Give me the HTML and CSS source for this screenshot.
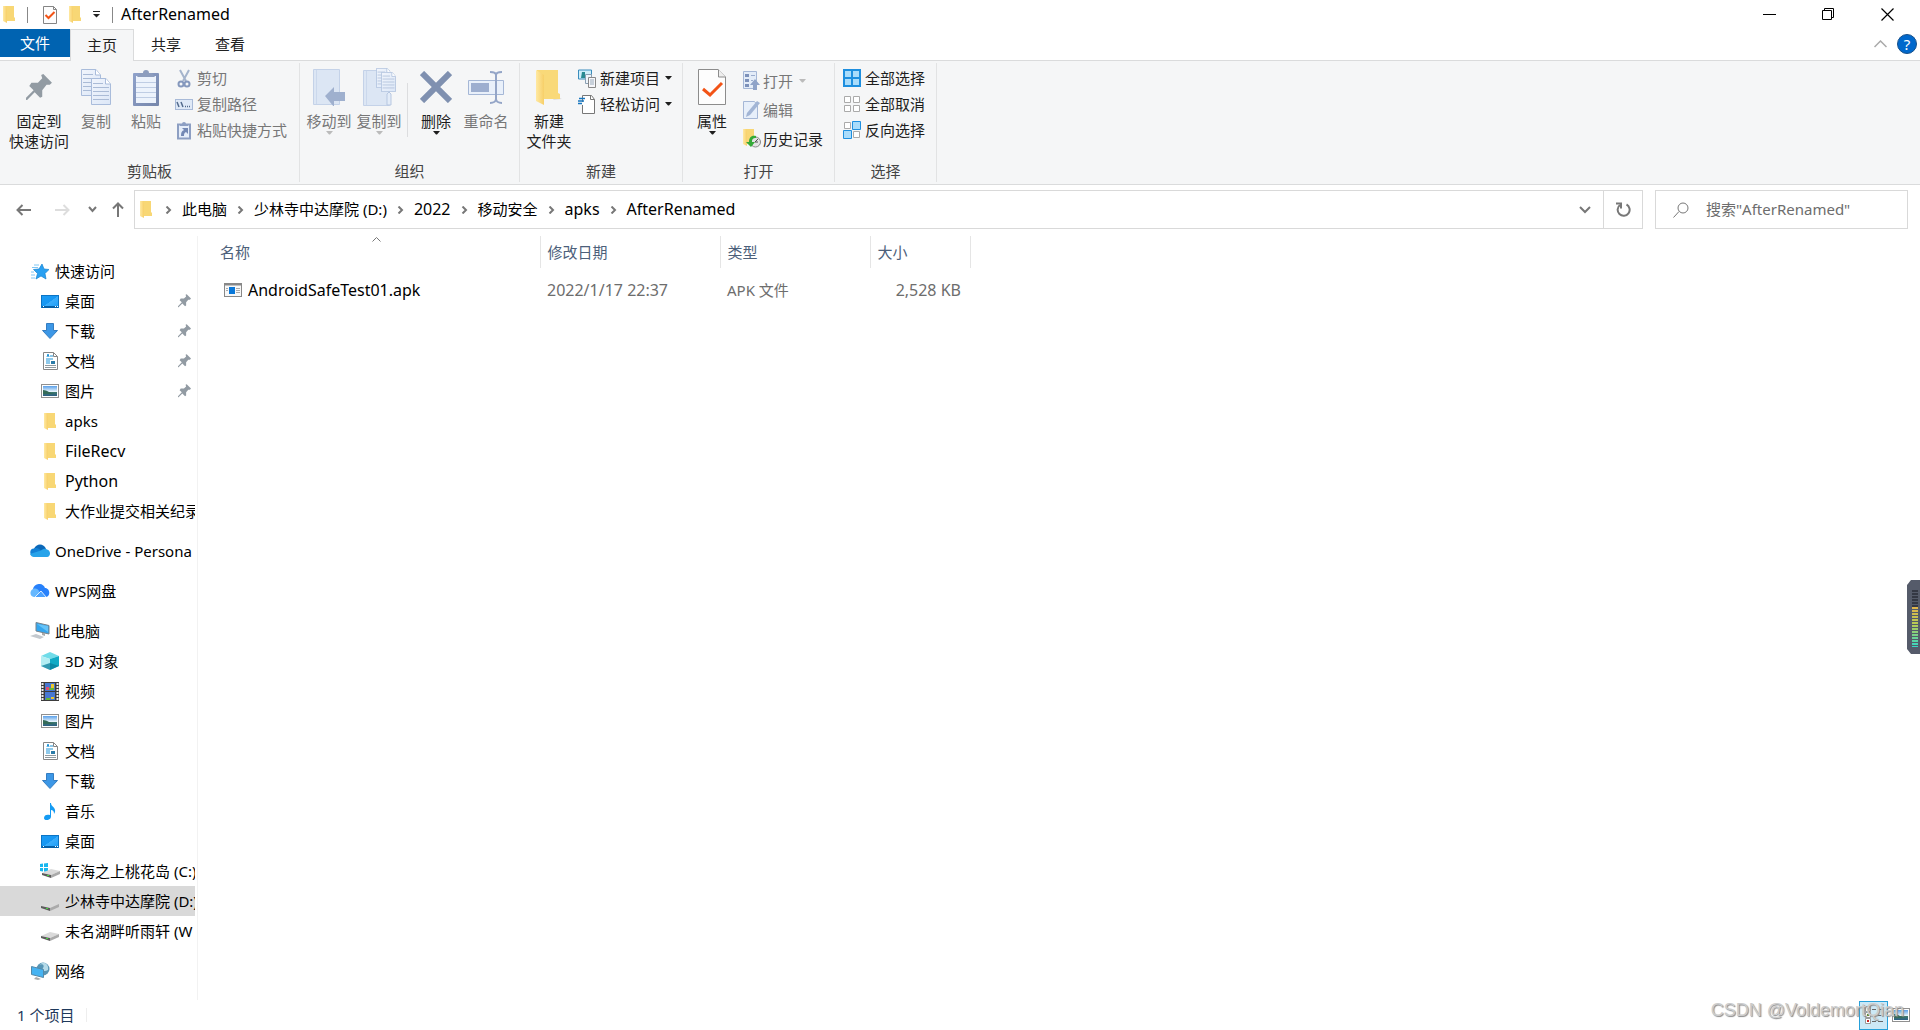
FILE: index.html
```html
<!DOCTYPE html>
<html lang="zh-CN">
<head>
<meta charset="utf-8">
<meta name="viewport" content="width=device-width, initial-scale=1">
<title>AfterRenamed</title>
<link rel="stylesheet" href="styles.css">
</head>
<body>
<svg class="defs" aria-hidden="true">
  <defs>
    <linearGradient id="gFolder" x1="0" x2="1"><stop offset="0" stop-color="#ffe9a2"/><stop offset="1" stop-color="#f7cf68"/></linearGradient>
    <linearGradient id="gDesk" x1="0" y1="0" x2="1" y2="1"><stop offset="0" stop-color="#1a9bf5"/><stop offset=".5" stop-color="#1797f2"/><stop offset=".52" stop-color="#3badfb"/><stop offset="1" stop-color="#1b9cf7"/></linearGradient>
    <linearGradient id="gSky" x1="0" y1="0" x2="0" y2="1"><stop offset="0" stop-color="#5aa0ea"/><stop offset=".55" stop-color="#e6f3fb"/><stop offset=".6" stop-color="#3f7a6a"/><stop offset="1" stop-color="#2c5f86"/></linearGradient>
    <linearGradient id="gClip" x1="0" x2="1" y2="1"><stop offset="0" stop-color="#8fa2cb"/><stop offset="1" stop-color="#7686ab"/></linearGradient>
    <linearGradient id="gPaper" y2="1"><stop offset="0" stop-color="#f1f5fc"/><stop offset="1" stop-color="#dce7f7"/></linearGradient>
    <linearGradient id="gLevel" x2="0" y2="1"><stop offset="0" stop-color="#e2b44a"/><stop offset=".45" stop-color="#b4cc56"/><stop offset="1" stop-color="#35d9c4"/></linearGradient>
    <symbol id="folder" viewBox="0 0 12 17"><path d="M3 0h8v11l1 1v3H3z" fill="#f8d775"/><path d="M0 0h3l1 4v13l-4-2z" fill="url(#gFolder)"/></symbol>
    <symbol id="pin" viewBox="0 0 24 25"><path d="M16 0l8 8-2 2-3 0-4 5 0 6-2 1-5-5-7 7-1 0 0-2 7-7-4-4 2-3 6 0 4-4-1-3z" fill="#929ba3"/></symbol>
    <symbol id="desktop" viewBox="0 0 18 13"><rect x=".5" y=".5" width="17" height="12" fill="url(#gDesk)" stroke="#0b74c4"/><path d="M1 12h16" stroke="#0560a8" stroke-width="2"/><path d="M2 11.500h1M14 11.500h1M16 11.500h1" stroke="#fff"/></symbol>
    <symbol id="down" viewBox="0 0 16 16"><path d="M4.500.5h7v7h4L8 15.500.5 7.500h4z" fill="#3c97e6" stroke="#347dc1"/></symbol>
    <symbol id="doc" viewBox="0 0 15 18"><path d="M.5.5h10l4 4v13H.5z" fill="#fff" stroke="#868686"/><path d="M10.500.5v4h4" fill="none" stroke="#868686"/><path d="M4 5l1-3 1 3M7 4h3M3 7h7M3 9h4M3 11h4" fill="none" stroke="#1f93d6"/><path d="M8 9h4v3H8z" fill="#2d7ca8"/><path d="M2 13.500h11M2 15.500h11" stroke="#909a9f"/></symbol>
    <symbol id="picture" viewBox="0 0 18 14"><rect x=".5" y=".5" width="17" height="13" fill="#fff" stroke="#909090"/><path d="M2 2h14v10H2z" fill="url(#gSky)"/><path d="M2 6c4 0 7 3 11 4H2z" fill="#346b58"/></symbol>
    <symbol id="page" viewBox="0 0 20 27"><path d="M.5.5H15L19.500 6v20.500H.5z" fill="url(#gPaper)" stroke="#a9bcdb"/><path d="M14.500.5V6h5" fill="#fff" stroke="#a9bcdb"/><path d="M2 5.500h10M2 9.500h16M2 13.500h16M2 17.500h16M2 21.500h16" stroke="#aabbd6"/></symbol>
    <symbol id="checkpage" viewBox="0 0 28 36"><path d="M.5.500H20l7.500 7.500v27.500H.5z" fill="#fdfdfd" stroke="#8c8c8c"/><path d="M20.500.5V8h7" fill="#eee" stroke="#8c8c8c"/><path d="M5 20l7 6 12-12" fill="none" stroke="#f25316" stroke-width="3"/></symbol>
    <symbol id="drive" viewBox="0 0 18 9"><path d="M0 4L9 0l9 2-9 4z" fill="#dadada"/><path d="M0 4l9 2v3L0 6z" fill="#5c5c5c"/><path d="M9 6l9-4v3L9 9z" fill="#aaa"/><path d="M5 6.500h2" stroke="#43dc3b"/></symbol>
    <symbol id="chev" viewBox="0 0 7 8"><path d="M1.500.5L5 4 1.500 7.500" fill="none" stroke="#777" stroke-width="2"/></symbol>
    <symbol id="tri" viewBox="0 0 7 4"><path d="M0 0h7L4 3.500H3z" fill="currentColor"/></symbol>
  </defs>
</svg>

<header class="titlebar">
  <div class="quick">
    <svg class="i-folder" aria-hidden="true"><use href="#folder"/></svg>
    <span class="bar"></span>
    <button class="plain" aria-label="属性"><svg width="14" height="18"><path d="M.5.5h10l3 3v14H.5z" fill="#fdfdfd" stroke="#858585"/><path d="M10.500.5v3h3" fill="none" stroke="#858585"/><path d="M2.500 9l3 3 6-6" fill="none" stroke="#f25316" stroke-width="2"/></svg></button>
    <button class="plain" aria-label="新建文件夹"><svg class="i-folder"><use href="#folder"/></svg></button>
    <button class="plain" aria-label="自定义快速访问工具栏"><svg width="7" height="7"><path d="M0 .5h7" stroke="#222"/><path d="M0 3h7L3.500 6.500z" fill="#222"/></svg></button>
    <span class="bar"></span>
  </div>
  <h1>AfterRenamed</h1>
  <div class="winbtns">
    <button class="plain" aria-label="最小化"><svg width="13" height="13"><path d="M0 6.500h13" stroke="#000"/></svg></button>
    <button class="plain" aria-label="还原"><svg width="13" height="13" fill="none" stroke="#000"><path d="M.5 2.500h9v9h-9zM2.500 2V.5h9v9H10"/></svg></button>
    <button class="plain" aria-label="关闭"><svg width="13" height="13"><path d="M.5.5l12 12M12.500.5l-12 12" stroke="#000" stroke-width="1.200"/></svg></button>
  </div>
</header>

<nav class="tabs" aria-label="功能区">
  <button class="file">文件</button>
  <button class="tab active">主页</button>
  <button class="tab">共享</button>
  <button class="tab">查看</button>
  <div class="tabtools">
    <button class="plain" aria-label="折叠功能区"><svg width="13" height="8"><path d="M.5 7l6-6 6 6" fill="none" stroke="#aaa" stroke-width="1.500"/></svg></button>
    <button class="help" aria-label="帮助">?</button>
  </div>
</nav>

<section class="ribbon">
  <div class="group first">
    <div class="tools">
      <button class="big wide"><span class="pic"><svg width="26" height="27"><use href="#pin"/></svg></span>固定到<br>快速访问</button>
      <button class="big off"><span class="pic"><svg width="30" height="36"><use href="#page" width="20" height="27"/><use href="#page" x="10" y="9" width="20" height="27"/></svg></span>复制</button>
      <button class="big off"><span class="pic"><svg width="26" height="37"><rect y="4" width="26" height="33" rx="1" fill="url(#gClip)"/><rect x="3" y="7" width="20" height="27" fill="#edf3fc"/><path d="M3 13.500h20M3 18.500h20M3 23.500h20M3 28.500h20" stroke="#bfcde4"/><path d="M4 8l3-4h3a3 3 0 016 0h3l3 4z" fill="#8d9dbe"/></svg></span>粘贴</button>
      <div class="rows">
        <button class="small off"><svg width="18" height="19" viewBox="0 0 18 19" fill="none"><path d="M5 1l6 11M14 1L8 12" stroke="#a5b4cc" stroke-width="2"/><circle cx="6" cy="15" r="2.500" stroke="#8598bd" stroke-width="2"/><circle cx="12" cy="15" r="2.500" stroke="#8598bd" stroke-width="2"/></svg>剪切</button>
        <button class="small off"><svg width="18" height="11"><rect x=".5" y=".5" width="17" height="10" fill="#dfe9f7" stroke="#a8bad8"/><path d="M2 3l2 5M6 3l2 5M10 7.500h1M12 7.500h1M14 7.500h1" stroke="#536b8d" stroke-width="1.500"/></svg>复制路径</button>
        <button class="small off"><svg width="18" height="19"><path d="M3 3.500h12v14H3z" fill="#e6eefa" stroke="#8d9fc3" stroke-width="2"/><path d="M5 3h2a2 2 0 014 0h2v2H5z" fill="#8d9fc3"/><path d="M6 15c0-4 1-5 3-6L7 7h6v6l-2-2c-2 1-2 2-2 4z" fill="#7489b5"/></svg>粘贴快捷方式</button>
      </div>
    </div>
    <div class="caption">剪贴板</div>
  </div>
  <div class="group organize">
    <div class="tools">
      <button class="big off"><span class="pic"><svg width="32" height="37"><path d="M.5.500h26v35H.5z" fill="#dce6f4" stroke="#c4d2e8"/><path d="M3.500 1v34" stroke="#cbd8ec"/><path d="M12 27l9-9v5h11v9H21v6z" fill="#9fb0ce"/></svg></span>移动到<svg class="tri"><use href="#tri"/></svg></button>
      <button class="big off"><span class="pic"><svg width="34" height="38"><path d="M1.500 2.500h26v35h-26z" fill="#dce6f4" stroke="#c4d2e8"/><path d="M4.500 3v34" stroke="#cbd8ec"/><path d="M25 37V26l2-2 2 2v11z" fill="#e3ecf8" stroke="#b7c7e1"/><use href="#page" x="14" width="15" height="20"/><use href="#page" x="19" y="4" width="15" height="20"/></svg></span>复制到<svg class="tri"><use href="#tri"/></svg></button>
      <span class="rule"></span>
      <button class="big"><span class="pic"><svg width="32" height="32"><path d="M2 2l28 28M30 2L2 30" stroke="#7f90b0" stroke-width="6"/></svg></span>删除<svg class="tri"><use href="#tri"/></svg></button>
      <button class="big off"><span class="pic"><svg width="36" height="34" fill="none"><path d="M.5 10.500h35v14H.5z" fill="#e9f0fa" stroke="#a5b7d6"/><path d="M3 13h18v9H3z" fill="#9daecf"/><path d="M22 2c4 0 6 1 6 3v24c0 2-2 4-6 4M34 2c-4 0-6 1-6 3v24c0 2 2 4 6 4" stroke="#94a5c7" stroke-width="2"/></svg></span>重命名</button>
    </div>
    <div class="caption">组织</div>
  </div>
  <div class="group create">
    <div class="tools">
      <button class="big"><span class="pic"><svg width="26" height="35" viewBox="0 0 26 35"><path d="M20 26l6 3-9 1z" fill="#ddd"/><path d="M1 0h21v23l2 1v5H1z" fill="#f9d979"/><path d="M0 0l8 5v30l-8-4z" fill="url(#gFolder)"/></svg></span>新建<br>文件夹</button>
      <div class="rows">
        <button class="small"><svg width="18" height="19"><path d="M.5 1h13v9H.5z" fill="#cdeefa" stroke="#3b8dbd"/><path d="M4 3h3v6H3z" fill="#278a92"/><path d="M7.500 5.500h6v9h-6z" fill="#eef5fc" stroke="#8ba0b3"/><path d="M10.500 8.500h7v10h-7z" fill="#f7f7fa" stroke="#888"/><path d="M12 11h4M12 13h4M12 15h4" stroke="#9ab"/></svg>新建项目<svg class="tri"><use href="#tri"/></svg></button>
        <button class="small"><svg width="18" height="19"><path d="M4.500 7V.5h9l3 4v14h-12V10" fill="#fff" stroke="#777"/><path d="M12.500.5v4h4" fill="none" stroke="#777"/><path d="M1 3.500h6M0 6h6M0 8.500h4" stroke="#1877c0" stroke-width="1.500"/></svg>轻松访问<svg class="tri"><use href="#tri"/></svg></button>
      </div>
    </div>
    <div class="caption">新建</div>
  </div>
  <div class="group open">
    <div class="tools">
      <button class="big"><span class="pic"><svg width="28" height="36"><use href="#checkpage"/></svg></span>属性<svg class="tri"><use href="#tri"/></svg></button>
      <div class="rows roomy">
        <button class="small off"><svg width="18" height="19"><path d="M.5.5h13v17H.5z" fill="#e3ecf8" stroke="#a5b7d6"/><path d="M2 3h4v3H2zM2 8h4v3H2zM2 13h4v3H2z" fill="#7d91ba"/><path d="M8 4.500h4M8 9.500h2" stroke="#9aaccd"/><path d="M7 14l5-6 5 6h-3v5h-4v-5z" fill="#8fa3c8"/></svg>打开<svg class="tri"><use href="#tri"/></svg></button>
        <button class="small off"><svg width="18" height="19"><path d="M.5 1.500h11l3 4v13H.5z" fill="#e7effa" stroke="#a5b7d6"/><path d="M3 17l1-4L14 1l3 2L7 15z" fill="#a2b5d5"/></svg>编辑</button>
        <button class="small"><svg width="18" height="19"><use href="#folder" width="12" height="17"/><circle cx="12.500" cy="13" r="5" fill="#e3e3e3" stroke="#888"/><path d="M12 13l3-3M12 13h3" stroke="#555"/><path d="M13 7c-5-1-7 2-7 6H3l5 5 4-5H9c0-3 1-4 4-4z" fill="#35aa38"/></svg>历史记录</button>
      </div>
    </div>
    <div class="caption">打开</div>
  </div>
  <div class="group select">
    <div class="tools">
      <div class="rows">
        <button class="small"><svg width="18" height="18"><path d="M1 1h16v16H1z" fill="#a9dcfb" stroke="#1e8fdf" stroke-width="2"/><path d="M9 1v16M1 9h16" stroke="#1e8fdf" stroke-width="2"/></svg>全部选择</button>
        <button class="small"><svg width="18" height="18" fill="#fff" stroke="#aaa"><path d="M1.500 1.500h6v6h-6zM10.500 1.500h6v6h-6zM1.500 10.500h6v6h-6zM10.500 10.500h6v6h-6z"/></svg>全部取消</button>
        <button class="small"><svg width="18" height="18" fill="#fff" stroke="#aaa"><path d="M1.500 1.500h6v6h-6zM10.500 10.500h6v6h-6z"/><path d="M9.500.5h8v8h-8zM.5 9.500h8v8h-8z" fill="#a9dcfb" stroke="#1e8fdf"/></svg>反向选择</button>
      </div>
    </div>
    <div class="caption">选择</div>
  </div>
</section>

<div class="navbar">
  <div class="history">
    <button class="plain" aria-label="后退"><svg width="15" height="12"><path d="M15 6H1M6.500 1l-5 5 5 5" fill="none" stroke="#777" stroke-width="2"/></svg></button>
    <button class="plain" aria-label="前进"><svg width="15" height="12"><path d="M0 6h14M8.500 1l5 5-5 5" fill="none" stroke="#ddd" stroke-width="2"/></svg></button>
    <button class="plain narrow" aria-label="最近位置"><svg width="9" height="7"><path d="M1 1l3.500 4L8 1" fill="none" stroke="#777" stroke-width="2"/></svg></button>
    <button class="plain up" aria-label="上移"><svg width="12" height="15"><path d="M6 15V1M1 6.500l5-5 5 5" fill="none" stroke="#777" stroke-width="2"/></svg></button>
  </div>
  <div class="address">
    <svg class="i-folder" aria-hidden="true"><use href="#folder"/></svg>
    <svg class="chev"><use href="#chev"/></svg><a href="#">此电脑</a>
    <svg class="chev"><use href="#chev"/></svg><a href="#">少林寺中达摩院 (D:)</a>
    <svg class="chev"><use href="#chev"/></svg><a class="latin" href="#">2022</a>
    <svg class="chev"><use href="#chev"/></svg><a href="#">移动安全</a>
    <svg class="chev"><use href="#chev"/></svg><a class="latin" href="#">apks</a>
    <svg class="chev"><use href="#chev"/></svg><a class="latin" href="#">AfterRenamed</a>
    <button class="plain drop" aria-label="以前的位置"><svg width="12" height="8"><path d="M1 1l5 5 5-5" fill="none" stroke="#777" stroke-width="2"/></svg></button>
    <button class="plain refresh" aria-label="刷新"><svg width="15" height="15" fill="none" stroke="#777" stroke-width="2"><path d="M10.500 2.500a6 6 0 11-6.500.5"/><path d="M0 1.500h5v5"/></svg></button>
  </div>
  <label class="search">
    <svg width="16" height="16" fill="none" stroke="#777"><circle cx="10" cy="6" r="5"/><path d="M6 9.500L.5 15.500"/></svg>
    <input type="text" aria-label="搜索" placeholder='搜索"AfterRenamed"'>
  </label>
</div>

<main class="content">
  <nav class="tree" aria-label="导航窗格">
    <ul>
      <li><a class="root" href="#"><span class="ico"><svg width="18" height="17"><path d="M11 1l2 5 5 .5-4 4 1 5.500-5-3-5 3 1.500-5.500-4-4L8 6z" fill="#28a0f2" stroke="#1682d0" stroke-width=".7"/><path d="M3 2h5M1 4.500h6M0 9h3M0 12h4M0 15h4" stroke="#7fc6f4"/></svg></span>快速访问</a></li>
      <li><a href="#"><span class="ico"><svg width="18" height="13"><use href="#desktop"/></svg></span>桌面<svg class="pin"><use href="#pin"/></svg></a></li>
      <li><a href="#"><span class="ico"><svg width="16" height="16"><use href="#down"/></svg></span>下载<svg class="pin"><use href="#pin"/></svg></a></li>
      <li><a href="#"><span class="ico"><svg width="15" height="18"><use href="#doc"/></svg></span>文档<svg class="pin"><use href="#pin"/></svg></a></li>
      <li><a href="#"><span class="ico"><svg width="18" height="14"><use href="#picture"/></svg></span>图片<svg class="pin"><use href="#pin"/></svg></a></li>
      <li><a href="#"><span class="ico"><svg class="i-folder"><use href="#folder"/></svg></span>apks</a></li>
      <li><a class="latin" href="#"><span class="ico"><svg class="i-folder"><use href="#folder"/></svg></span>FileRecv</a></li>
      <li><a class="latin" href="#"><span class="ico"><svg class="i-folder"><use href="#folder"/></svg></span>Python</a></li>
      <li><a href="#"><span class="ico"><svg class="i-folder"><use href="#folder"/></svg></span>大作业提交相关纪录</a></li>
    </ul>
    <ul>
      <li><a class="root" href="#"><span class="ico"><svg width="20" height="14"><path d="M4 5c2-6 10-6 12 0l-6 5-6-3z" fill="#0b68b9"/><path d="M4 4.500c3-1 5 0 7 2l-7 6c-5-1-5-8 0-8z" fill="#1280d6"/><path d="M11 6.500c2-2 5-2 6-1 4 1 4 7 0 7.500H4c-2 0-3-1-4-3z" fill="#27a3ea"/></svg></span>OneDrive - Persona</a></li>
    </ul>
    <ul>
      <li><a class="root" href="#"><span class="ico"><svg width="20" height="14"><path d="M3 5c1-6 10-7 12-1 5 0 6 8 1 9h-6z" fill="#2781fb"/><path d="M3 5c3-1 5 0 6 2l4 6H4C0 13-1 7 3 5z" fill="#66b8ff"/><path d="M5 13l6-6 5 6" fill="#4aa1ff" stroke="#fff" stroke-width=".8"/></svg></span>WPS网盘</a></li>
    </ul>
    <ul>
      <li><a class="root" href="#"><span class="ico"><svg width="20" height="18"><path d="M6 .5l13 3V12L6 9z" fill="#35a6ee" stroke="#77838c"/><path d="M7 2l11 8V4z" fill="#65c3f8"/><path d="M12 11v2l3 1v-3" fill="#aaa"/><path d="M0 14l6-2 8 3-4 2z" fill="#c4c9ce"/></svg></span>此电脑</a></li>
      <li><a href="#"><span class="ico"><svg width="18" height="18"><path d="M0 4l9-4 9 4-9 3z" fill="#70dce9"/><path d="M0 4l9 3v11l-9-4z" fill="#b3eef3"/><path d="M18 4L9 7v11l9-4z" fill="#0faac5"/><path d="M0 14l9-3 9 3-9 4z" fill="#087d9b" opacity=".75"/></svg></span>3D 对象</a></li>
      <li><a href="#"><span class="ico"><svg width="18" height="19"><path d="M0 0h18v19H0z" fill="#3c3c3c"/><path d="M4 1h10v8H4zM4 10h10v8H4z" fill="#4778d1"/><path d="M1.500 1v17M16.500 1v17" stroke="#eee" stroke-width="2" stroke-dasharray="2 1"/><path d="M10 2h3v4h-3zM10 15h3v2h-3z" fill="#ebc62d"/><path d="M5 5h3v3H5z" fill="#df4e74"/><path d="M8 6h5v2H8zM5 16h4v2H5z" fill="#65b536"/></svg></span>视频</a></li>
      <li><a href="#"><span class="ico"><svg width="18" height="14"><use href="#picture"/></svg></span>图片</a></li>
      <li><a href="#"><span class="ico"><svg width="15" height="18"><use href="#doc"/></svg></span>文档</a></li>
      <li><a href="#"><span class="ico"><svg width="16" height="16"><use href="#down"/></svg></span>下载</a></li>
      <li><a href="#"><span class="ico"><svg width="12" height="17"><path d="M6 0h1c0 4 5 4 4 9l-1 2c0-3-1-4-3-4v7c-1 4-7 4-7 1s3-4 6-3z" fill="#149bf3"/></svg></span>音乐</a></li>
      <li><a href="#"><span class="ico"><svg width="18" height="13"><use href="#desktop"/></svg></span>桌面</a></li>
      <li><a href="#"><span class="ico"><svg width="20" height="16"><path d="M0 1l3-.5V4H0zM4 .5L8 0v4H4zM0 5h3v3.500L0 8zM4 5h4v4l-4-.5z" fill="#19b7ef"/><use href="#drive" x="2" y="6" width="18" height="9"/></svg></span>东海之上桃花岛 (C:)</a></li>
      <li><a class="current" href="#"><span class="ico low"><svg width="18" height="9"><use href="#drive"/></svg></span>少林寺中达摩院 (D:)</a></li>
      <li><a href="#"><span class="ico low"><svg width="18" height="9"><use href="#drive"/></svg></span>未名湖畔听雨轩 (W</a></li>
    </ul>
    <ul>
      <li><a class="root" href="#"><span class="ico"><svg width="19" height="18"><circle cx="12" cy="7" r="6.500" fill="#5795b5"/><path d="M8 3c3-2 6 0 4 3s2 4 5 2c1-4-2-8-6-7z" fill="#b5dae8"/><path d="M.5 4.500l12 3v8l-12-3z" fill="#46b3f2" stroke="#5489a9"/><path d="M5 15l5 2-3 1-4-1z" fill="#aaa"/></svg></span>网络</a></li>
    </ul>
  </nav>
  <div class="files">
    <table>
      <colgroup><col class="c-name"><col class="c-date"><col class="c-type"><col class="c-size"></colgroup>
      <thead>
        <tr><th aria-sort="ascending">名称<svg class="sort" width="9" height="5"><path d="M.5 4.500l4-4 4 4" fill="none" stroke="#777"/></svg></th><th>修改日期</th><th>类型</th><th>大小</th></tr>
      </thead>
      <tbody>
        <tr><td class="name latin"><span><svg width="18" height="14"><rect x=".5" y=".5" width="17" height="13" fill="#f7f7f7" stroke="#888"/><path d="M0 1.500h18" stroke="#888" stroke-width="2"/><path d="M5 4h6v7H5z" fill="#0877d9"/><path d="M12 5.500h4M12 7.500h4M12 9.500h4M2 5.500h2M2 7.500h2" stroke="#aaa"/></svg>AndroidSafeTest01.apk</span></td><td class="latin">2022/1/17 22:37</td><td>APK 文件</td><td class="size latin">2,528 KB</td></tr>
      </tbody>
    </table>
  </div>
</main>

<footer class="status">
  <span class="count">1 个项目</span>
  <div class="views">
    <button class="details" aria-label="详细信息"><svg width="18" height="18"><path d="M.5.5h5v5h-5zM.5 6.500h5v5h-5zM.5 12.500h5v5h-5z" fill="#fff" stroke="#999"/><path d="M2 2h2v2H2z" fill="#557fc0"/><path d="M2 8h2v2H2z" fill="#6b8d2c"/><path d="M2 14h2v2H2z" fill="#c22"/><path d="M7 3.500h4M13 3.500h5M7 9.500h4M13 9.500h5M7 15.500h4M13 15.500h5" stroke="#666"/></svg></button>
    <button class="plain" aria-label="大图标"><svg width="18" height="14"><use href="#picture"/></svg></button>
  </div>
</footer>

<div class="watermark">CSDN @VoldemortQian</div>
<svg class="meter" width="13" height="74" aria-hidden="true"><path d="M13 0H4L0 5v64l4 5h9z" fill="#555b6a"/><path d="M8 10v17" stroke="#343844" stroke-width="6" stroke-dasharray="2 1"/><path d="M5 27h6v40H5z" fill="url(#gLevel)"/><path d="M8 29v38" stroke="#555b6a" stroke-width="6" stroke-dasharray="1 2"/></svg>
</body>
</html>
```
FILE: styles.css
```css
* { box-sizing: border-box; }
body {
  margin: 0;
  min-height: 100vh;
  display: flex;
  flex-direction: column;
  position: relative;
  background: #fff;
  color: #000;
  font: 15px/20px "Noto Sans", "Noto Sans CJK SC", sans-serif;
}
svg { display: block; flex: none; }
.defs { position: absolute; width: 0; height: 0; }
button { font: inherit; color: inherit; border: 0; padding: 0; background: none; }
a { color: inherit; text-decoration: none; }
.plain { display: flex; align-items: center; justify-content: center; }
.i-folder { width: 12px; height: 17px; }
.latin { font-size: 16px; }

/* title bar */
.titlebar { display: flex; height: 29px; align-items: center; }
.quick { display: flex; align-items: center; padding-left: 3px; gap: 12px; }
.quick .bar { width: 1px; height: 16px; background: #888; }
.quick .bar + .plain { margin-left: 3px; }
h1 { margin: 0; padding: 0 0 2px 8px; font-size: 16px; font-weight: 400; }
.winbtns { display: flex; margin-left: auto; padding-right: 3px; }
.winbtns button { width: 59px; height: 29px; }

/* ribbon tabs */
.tabs { display: flex; height: 32px; align-items: flex-start; border-bottom: 1px solid #dadbdc; }
.file { width: 70px; height: 28px; background: #0063b1; color: #fff; }
.tab { width: 64px; height: 31px; padding-bottom: 2px; color: #222; }
.tab.active { height: 32px; background: #f5f6f7; border: 1px solid #dadbdc; border-bottom: 0; }
.tabtools { display: flex; align-items: center; gap: 10px; margin-left: auto; padding: 5px 3px 0 0; }
.help { width: 20px; height: 20px; border: 1px solid #17508a; border-radius: 50%; background: #0068cc; color: #fff; line-height: 18px; }

/* ribbon */
.ribbon { display: flex; height: 124px; padding: 2px 0; background: #f5f6f7; border-bottom: 1px solid #dadbdc; color: #1e1e1e; }
.group { display: flex; flex-direction: column; border-right: 1px solid #e2e3e4; }
.first { width: 300px; }
.organize { width: 220px; }
.create { width: 163px; }
.open { width: 152px; }
.select { width: 102px; }
.tools { display: flex; flex: 1; padding-left: 4px; }
.first .tools { padding-left: 8px; }
.caption { padding-bottom: 1px; text-align: center; color: #444; }
.big { display: flex; flex-direction: column; align-items: center; width: 50px; white-space: nowrap; align-self: flex-start; text-align: center; line-height: 20px; }
.wide { width: 62px; margin-right: 1px; }
.pic { display: flex; align-items: center; justify-content: center; height: 48px; }
.tri { width: 7px; height: 4px; }
.off { color: #777; }
.off .tri { color: #bbb; }
.small { display: flex; align-items: center; gap: 4px; height: 26px; white-space: nowrap; }
.small .tri { margin-left: 1px; }
.rows { padding: 2px 0 0 4px; }
.rows.roomy { padding: 3px 0 0 6px; }
.roomy .small { height: 29px; gap: 2px; }
.roomy .tri { margin-left: 4px; }
.rule { width: 1px; height: 54px; margin: 20px 3px 0; background: #dcdddf; }

/* navigation bar */
.navbar { display: flex; padding: 5px 12px 0 0; gap: 12px; }
.history { display: flex; width: 122px; padding-left: 4px; }
.history .plain { width: 39px; }
.history .narrow { width: 20px; }
.history .up { width: 32px; margin-right: -12px; }
.address { display: flex; flex: 1; align-items: center; height: 39px; padding-left: 5px; border: 1px solid #d9d9d9; }
.address a { padding-bottom: 2px; }
.chev { width: 7px; height: 8px; margin: 0 10px; }
.i-folder + .chev { margin-left: 13px; }
.drop { width: 37px; height: 37px; margin-left: auto; }
.refresh { width: 39px; height: 37px; border-left: 1px solid #d9d9d9; }
.search { display: flex; align-items: center; width: 253px; height: 39px; gap: 17px; padding-left: 17px; border: 1px solid #d9d9d9; }
.search input { width: 180px; border: 0; padding: 0 0 2px; outline: 0; font: inherit; }
.search input::placeholder { color: #6d6d6d; opacity: 1; }

/* folder tree and file list */
.content { display: flex; flex: 1; padding-top: 7px; }
.tree { width: 198px; padding: 20px 2px 0 0; border-right: 1px solid #f2f2f2; }
.tree ul { list-style: none; margin: 0 0 10px; padding: 0; }
.tree a { display: flex; align-items: center; height: 30px; padding-left: 39px; overflow: hidden; white-space: nowrap; }
.tree a.root { padding-left: 29px; }
.tree .current { background: #d9d9d9; }
.ico { display: flex; flex: none; align-items: center; justify-content: center; width: 22px; height: 20px; margin-right: 4px; }
.low { align-items: flex-end; }
.tree .pin { width: 13px; height: 14px; margin-left: auto; margin-right: 4px; }
.files { flex: 1; padding-left: 15px; }
table { width: 757px; border-collapse: collapse; table-layout: fixed; }
.c-name { width: 327px; }
.c-date { width: 180px; }
.c-type { width: 150px; }
.c-size { width: 100px; }
th, td { padding: 0 8px 0 7px; text-align: left; font-weight: 400; }
th { position: relative; height: 32px; border-right: 1px solid #e5e5e5; color: #4c607a; }
td { height: 44px; color: #6d6d6d; }
.sort { position: absolute; top: 1px; left: 50%; margin-left: -4px; }
.name span { display: flex; align-items: center; gap: 6px; padding-left: 4px; color: #000; }
.size { padding-right: 9px; text-align: right; }

/* status bar */
.status { display: flex; align-items: center; height: 30px; padding-left: 17px; color: #1e395b; }
.count { padding-right: 12px; border-right: 1px solid #eee; line-height: 14px; }
.views { display: flex; gap: 4px; margin-left: auto; padding-right: 10px; }
.details { display: flex; align-items: center; justify-content: center; width: 29px; height: 29px; background: #cce8f6; border: 1px solid #26a0da; }

/* overlays */
.watermark { position: absolute; right: 16px; bottom: 10px; font: 18px/20px "Liberation Sans", sans-serif; color: #ccc; text-shadow: 1px 1px 1px #888; }
.meter { position: absolute; right: 0; top: 580px; }
```
